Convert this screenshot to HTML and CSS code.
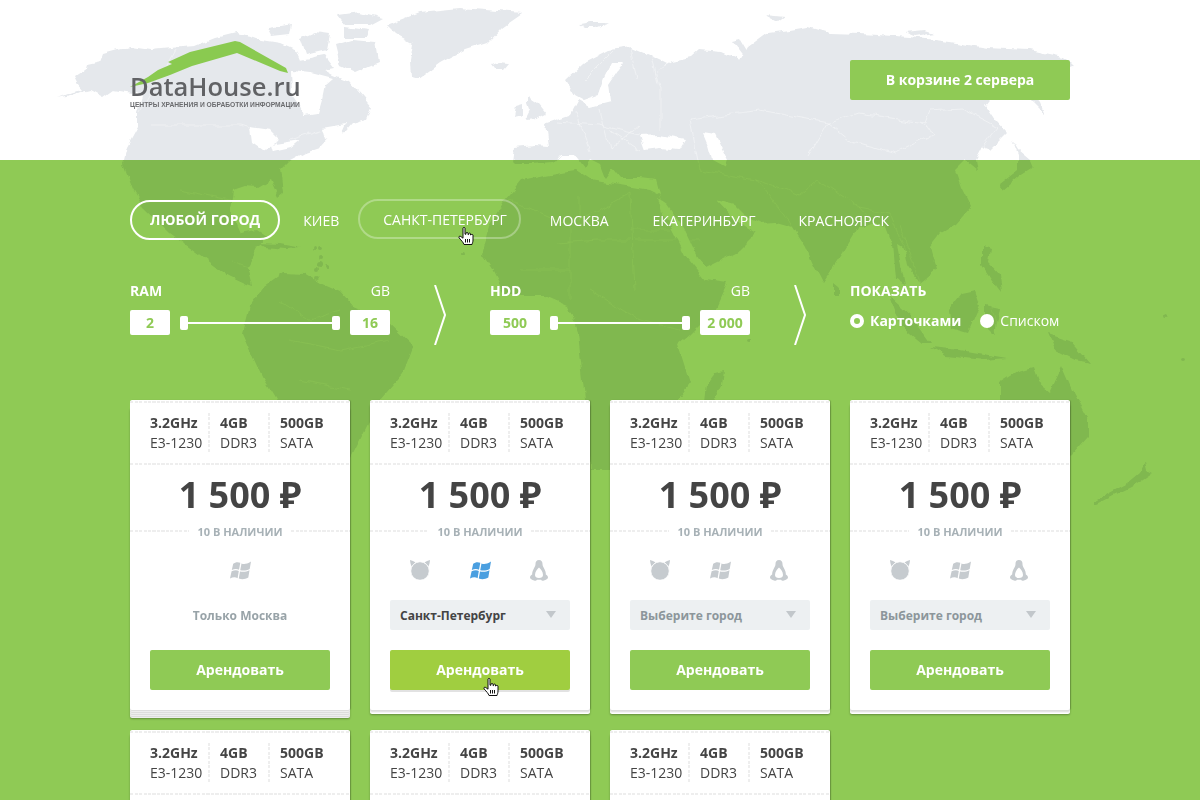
FILE: index.html
```html
<!DOCTYPE html>
<html lang="ru">
<head>
    <meta charset="UTF-8">
    <title>DataHouse.ru</title>
    <link rel="stylesheet" href="styles.css">
</head>
<body>
<svg class="defs" width="0" height="0">
    <filter id="rough" x="0" y="0" width="100%" height="100%">
        <feTurbulence type="fractalNoise" baseFrequency="0.07" numOctaves="3" seed="7"/>
        <feDisplacementMap in="SourceGraphic" scale="7" xChannelSelector="R" yChannelSelector="G"/>
    </filter>
    <symbol id="i-bsd" viewBox="0 0 20 20">
        <path d="M0 0C2 .4 4 1.200 5.500 2.600L2 7C.8 5 .1 2.500 0 0Z"/>
        <path d="M20 0C18 .4 16 1.200 14.500 2.600L18 7C19.200 5 19.900 2.500 20 0Z"/>
        <circle cx="10" cy="11" r="9.300" stroke="#fff" stroke-width="1"/>
    </symbol>
    <symbol id="i-win" viewBox="0 0 21 19">
        <path d="M3.200 2.800C5 1.200 8 .8 10.300 1.800L9 8.800C7 7.800 4.500 7.800 1.800 9Z"/>
        <path d="M11.500 2.400C13.500 3.600 16.500 3.400 21 .6L19.700 8C16.500 9.700 13.500 10 10.200 9.200Z"/>
        <path d="M1.600 10.300C4.500 9 7 9 8.800 10L7.600 17.300C5.500 16 3 16 0 17.600Z"/>
        <path d="M10 10.400C13 11.200 16 11 19.500 9.300L18.300 16.500C15 18.300 12.300 18.700 8.800 17.500Z"/>
    </symbol>
    <symbol id="i-tux" viewBox="0 0 18 21">
        <path fill-rule="evenodd" d="M9 0C11.400 0 12.600 1.800 12.500 4C12.400 6 13.500 7.200 14.500 9.200C15.500 11.200 16 13 15.800 14.600C17 15.200 18 16.200 18 17.400C18 18.800 16 19.800 13.800 20.600C12.800 21 11.500 20.800 11 19.800L7 19.800C6.500 20.800 5.200 21 4.200 20.600C2 19.800 0 18.800 0 17.400C0 16.200 1 15.200 2.200 14.600C2 13 2.500 11.200 3.500 9.200C4.500 7.200 5.600 6 5.500 4C5.400 1.800 6.600 0 9 0ZM9 7.500C7 9 5 12 5 15C5 16.800 6.500 18 9 18C11.500 18 13 16.800 13 15C13 12 11 9 9 7.500Z"/>
    </symbol>
    <symbol id="i-hand" viewBox="0 0 16 19">
        <path d="M5 1.200C5 .2 7 .2 7 1.200V7.200H8V6.200C8 5.200 10 5.200 10 6.200V7.600H10.600V6.800C10.600 5.800 12.500 5.800 12.500 6.800V8H13C13 7.200 15 7.200 15 8.200V13C15 15 14.500 15.600 14 17.500H6C5.400 15.500 3.600 13.800 1.200 11C.2 9.800 1.600 8.600 2.800 9.500L5 11.200Z" fill="#fff" stroke="#111" stroke-width="1"/>
        <path d="M7.500 12V15.500M9.500 12V15.500M11.500 12V15.500" fill="none" stroke="#111" stroke-width="1"/>
    </symbol>
</svg>
<div class="page">
    <svg class="world" viewBox="0 0 1200 800">
        <g filter="url(#rough)">
        <g class="land">
            <path d="M57 98L72 92 83 90 78 84 75 78 84 72 86 65 100 62 103 54 118 50 130 47 150 50 170 48 195 46 215 38 235 33 250 36 262 40 280 43 296 50 300 60 310 62 333 75 350 82 363 97 372 108 367 120 352 124 345 132 333 133 320 147 305 152 290 160 280 170 283 193 278 197 270 180 258 187 245 186 233 190 230 210 240 233 257 230 267 237 258 247 248 267 253 287 247 285 230 277 207 260 170 233 143 207 133 190 123 163 127 147 138 127 138 113 143 97 133 93 113 90 103 97 90 90Z"/>
            <path d="M263 287L283 273 305 274 320 283 340 292 353 307 385 320 413 347 403 373 380 400 360 440 340 480 320 470 300 440 277 400 263 377 243 333 250 305Z"/>
            <path d="M337 15L360 12 383 18 370 25 345 25ZM300 40L316 33 330 35 327 50 305 55ZM335 45L352 40 375 42 378 62 355 72 340 65ZM300 60L325 55 335 68 315 72ZM345 27L368 30 365 38 345 38ZM268 28L292 24 290 34 272 36Z"/>
            <path d="M387 25L420 12 460 8 522 13 502 27 487 43 465 50 441 63 418 80 411 78 410 60 413 43 395 33Z"/>
            <path d="M492 65L500 62 510 63 505 69 495 69ZM528 93L532 100 538 104 546 114 536 119 525 120 530 110 528 104ZM517 106L524 104 524 114 515 116ZM579 24L590 22 609 22 596 28 585 28ZM732 42L740 40 752 60 744 58ZM765 15L785 17 778 22ZM905 32L925 30 935 33 915 36Z"/>
            <path d="M513 163L515 147 535 145 548 146 545 124 570 115 578 100 590 107 610 102 608 85 618 70 624 62 612 62 604 78 598 95 584 100 575 95 566 80 584 63 609 50 630 47 660 60 668 64 657 72 672 62 691 58 700 50 722 52 740 60 748 47 767 33 790 30 808 27 829 33 860 34 910 37 950 42 987 48 1030 50 1063 57 1073 67 1050 72 1035 75 1025 85 1040 103 1045 115 1030 100 1012 92 995 92 985 105 995 120 1007 133 990 150 982 147 975 160 977 170 965 160 955 170 961 187 971 207 955 225 941 233 930 247 936 270 920 283 908 265 905 250 897 245 905 285 895 280 892 245 885 227 875 222 859 227 845 250 823 283 812 262 806 247 793 227 775 222 762 223 745 215 735 205 716 200 735 220 757 233 740 250 706 267 695 255 680 225 664 205 660 195 656 180 640 178 620 178 612 168 605 178 600 165 590 160 585 168 575 155 560 155 553 163 530 165 515 165Z"/>
            <path d="M522 180L545 175 575 170 590 180 620 185 650 190 660 195 670 225 685 255 705 280 727 283 715 310 690 335 678 345 690 383 670 410 640 470 590 470 585 400 578 333 568 305 545 295 505 295 492 270 482 255 490 225 505 200Z"/>
            <path d="M716 372L724 370 722 385 712 405 704 402 706 385ZM833 284L838 288 838 296 833 296ZM1012 140L1018 150 1030 160 1033 167 1020 175 1003 190 1000 184 1018 170 1018 155ZM982 247L990 250 988 262 1000 275 1002 293 992 280 982 265ZM890 297L910 315 930 343 922 343 900 325ZM961 293L975 290 980 305 968 333 950 328 948 310ZM930 347L960 350 1007 358 985 360 945 356ZM985 305L1000 308 995 335 985 325ZM1048 333L1070 340 1090 363 1075 360 1055 350ZM1000 383L1017 372 1033 368 1038 382 1050 392 1062 367 1072 390 1088 420 1088 437 1072 455 1000 470ZM1145 462L1147 470 1153 473 1132 487 1095 505 1095 501 1128 483 1140 473Z"/>
            <path d="M258 243L280 244 300 248 285 249 265 247Z"/>
            <circle cx="320" cy="250" r="2"/><circle cx="315" cy="250" r="2"/><circle cx="321" cy="258" r="2"/><circle cx="320" cy="265" r="3"/><circle cx="328" cy="267" r="2"/><circle cx="316" cy="270" r="2"/><circle cx="316" cy="278" r="2"/><circle cx="462" cy="253" r="2"/><circle cx="748" cy="340" r="2"/><circle cx="1165" cy="315" r="2"/><circle cx="1183" cy="360" r="2"/>
        </g>
        <g class="water">
            <path d="M292 70L310 72 333 78 325 85 322 100 318 114 305 116 300 105 293 95Z"/>
            <path d="M250 127L270 130 280 140 262 150 252 143ZM270 145L300 140 290 148 272 152ZM322 128L345 124 340 135 325 140Z"/>
            <path d="M640 136L660 135 686 140 680 150 660 148 645 150ZM703 133L715 135 727 160 725 167 712 160 708 145Z"/>
            <path d="M658 198L668 205 684 228 698 258 708 272 702 274 688 256 674 232 662 212Z"/>
        </g>
        <g class="borders">
            <path d="M150 125H240L262 132M140 113L175 50M290 140L323 130"/>
            <path d="M614 50L584 80M630 47L637 80M605 45L605 10M558 122L600 125 640 135M575 113L590 150M600 110L610 150 640 125M610 130L640 150M650 50L660 90 660 130"/>
            <path d="M690 120L760 110 828 123 859 113 925 123 930 110 961 108 997 127 982 147M828 123L849 140 895 153 936 133 920 123M808 157L828 123M690 120L700 170"/>
            <path d="M700 170L757 180 800 195 818 180 859 207 890 213 905 250M757 180L793 227M859 207L870 220 880 240M900 225L920 283"/>
            <path d="M232 260L260 270M280 300L310 320 340 310M290 340L340 350 390 340M300 380L350 390M180 190L230 200"/>
            <path d="M510 200L570 225 570 300M570 225L630 193 635 290M635 240L700 240M520 270L570 270M590 290L640 320 680 330M558 243L599 240 630 240M579 197V227M630 230H670"/>
            <path d="M990 300L1000 340"/>
        </g>
        </g>
    </svg>

    <header class="top">
        <a class="logo">
            <svg class="logo-roof" viewBox="0 0 170 52">
                <path d="M0 47L18 37 28 30 42 24 38 22 60 12 105 1 110 2 156 28 158 33 150 31 107 13 62 26 40 35 18 43Z"/>
            </svg>
            <span class="logo-name">DataHouse.ru</span>
            <span class="logo-sub">ЦЕНТРЫ ХРАНЕНИЯ И ОБРАБОТКИ ИНФОРМАЦИИ</span>
        </a>
        <a class="basket">В корзине 2 сервера</a>
    </header>

    <main class="content">
        <nav class="cities">
            <a class="city city-active">Любой город</a>
            <a class="city">Киев</a>
            <a class="city city-hover">Санкт-Петербург</a>
            <a class="city">Москва</a>
            <a class="city">Екатеринбург</a>
            <a class="city">Красноярск</a>
        </nav>

        <section class="filters">
            <div class="range">
                <div class="range-head"><b>RAM</b><span>GB</span></div>
                <div class="range-body">
                    <div class="range-val">2</div>
                    <div class="slider"><i></i><u></u><i></i></div>
                    <div class="range-val">16</div>
                </div>
            </div>
            <svg class="chevron" viewBox="0 0 12 60"><path d="M1 0L11 30 1 60"/></svg>
            <div class="range">
                <div class="range-head"><b>HDD</b><span>GB</span></div>
                <div class="range-body">
                    <div class="range-val range-val-wide">500</div>
                    <div class="slider"><i></i><u></u><i></i></div>
                    <div class="range-val range-val-wide">2 000</div>
                </div>
            </div>
            <svg class="chevron" viewBox="0 0 12 60"><path d="M1 0L11 30 1 60"/></svg>
            <div class="view">
                <div class="view-title">Показать</div>
                <div class="view-options">
                    <span class="radio radio-on">Карточками</span>
                    <span class="radio">Списком</span>
                </div>
            </div>
        </section>

        <section class="cards">
            <article class="card card-stack">
                <div class="specs">
                    <div class="spec spec-cpu"><b>3.2GHz</b>E3-1230</div>
                    <div class="spec spec-ram"><b>4GB</b>DDR3</div>
                    <div class="spec"><b>500GB</b>SATA</div>
                </div>
                <div class="price">1 500 ₽</div>
                <div class="stock">10 в наличии</div>
                <div class="os">
                    <svg class="ico ico-bsd ico-off"><use href="#i-bsd"/></svg>
                    <svg class="ico ico-win"><use href="#i-win"/></svg>
                    <svg class="ico ico-tux ico-off"><use href="#i-tux"/></svg>
                </div>
                <div class="only">Только Москва</div>
                <a class="rent">Арендовать</a>
            </article>
            <article class="card">
                <div class="specs">
                    <div class="spec spec-cpu"><b>3.2GHz</b>E3-1230</div>
                    <div class="spec spec-ram"><b>4GB</b>DDR3</div>
                    <div class="spec"><b>500GB</b>SATA</div>
                </div>
                <div class="price">1 500 ₽</div>
                <div class="stock">10 в наличии</div>
                <div class="os">
                    <svg class="ico ico-bsd"><use href="#i-bsd"/></svg>
                    <svg class="ico ico-win ico-blue"><use href="#i-win"/></svg>
                    <svg class="ico ico-tux"><use href="#i-tux"/></svg>
                </div>
                <div class="select select-filled">Санкт-Петербург</div>
                <a class="rent rent-hover">Арендовать</a>
                <svg class="hand hand-rent"><use href="#i-hand"/></svg>
            </article>
            <article class="card">
                <div class="specs">
                    <div class="spec spec-cpu"><b>3.2GHz</b>E3-1230</div>
                    <div class="spec spec-ram"><b>4GB</b>DDR3</div>
                    <div class="spec"><b>500GB</b>SATA</div>
                </div>
                <div class="price">1 500 ₽</div>
                <div class="stock">10 в наличии</div>
                <div class="os">
                    <svg class="ico ico-bsd"><use href="#i-bsd"/></svg>
                    <svg class="ico ico-win"><use href="#i-win"/></svg>
                    <svg class="ico ico-tux"><use href="#i-tux"/></svg>
                </div>
                <div class="select">Выберите город</div>
                <a class="rent">Арендовать</a>
            </article>
            <article class="card">
                <div class="specs">
                    <div class="spec spec-cpu"><b>3.2GHz</b>E3-1230</div>
                    <div class="spec spec-ram"><b>4GB</b>DDR3</div>
                    <div class="spec"><b>500GB</b>SATA</div>
                </div>
                <div class="price">1 500 ₽</div>
                <div class="stock">10 в наличии</div>
                <div class="os">
                    <svg class="ico ico-bsd"><use href="#i-bsd"/></svg>
                    <svg class="ico ico-win"><use href="#i-win"/></svg>
                    <svg class="ico ico-tux"><use href="#i-tux"/></svg>
                </div>
                <div class="select">Выберите город</div>
                <a class="rent">Арендовать</a>
            </article>
            <article class="card">
                <div class="specs">
                    <div class="spec spec-cpu"><b>3.2GHz</b>E3-1230</div>
                    <div class="spec spec-ram"><b>4GB</b>DDR3</div>
                    <div class="spec"><b>500GB</b>SATA</div>
                </div>
            </article>
            <article class="card">
                <div class="specs">
                    <div class="spec spec-cpu"><b>3.2GHz</b>E3-1230</div>
                    <div class="spec spec-ram"><b>4GB</b>DDR3</div>
                    <div class="spec"><b>500GB</b>SATA</div>
                </div>
            </article>
            <article class="card">
                <div class="specs">
                    <div class="spec spec-cpu"><b>3.2GHz</b>E3-1230</div>
                    <div class="spec spec-ram"><b>4GB</b>DDR3</div>
                    <div class="spec"><b>500GB</b>SATA</div>
                </div>
            </article>
        </section>

        <svg class="hand hand-city"><use href="#i-hand"/></svg>
    </main>
</div>
</body>
</html>
```

FILE: styles.css
```css
html, body {
    margin: 0;
    padding: 0;
    height: 800px;
    overflow: hidden;
}
body {
    font-family: "Open Sans", "Noto Sans", sans-serif;
    color: #444;
}
a {
    display: block;
}
.defs {
    position: absolute;
}
.page {
    position: relative;
    height: 800px;
    overflow: hidden;
    background: #fff;
    isolation: isolate;
}

/* map */
.world {
    position: absolute;
    left: 0;
    top: 0;
    width: 1200px;
    height: 800px;
}
.land {
    fill: #e5e8ec;
}
.water {
    fill: #fff;
}
.borders {
    fill: none;
    stroke: #fff;
    stroke-opacity: 0.4;
    stroke-width: 1;
}

/* header */
.top {
    position: relative;
    display: flex;
    justify-content: space-between;
    height: 160px;
    padding: 0 130px;
}
.logo {
    position: relative;
    width: 170px;
    padding-top: 72px;
}
.logo-roof {
    position: absolute;
    left: 0;
    top: 40px;
    width: 170px;
    height: 52px;
    fill: #8aca50;
}
.logo-name {
    position: relative;
    display: block;
    font-size: 25.500px;
    line-height: 28px;
    font-weight: 600;
    color: #616265;
    white-space: nowrap;
}
.logo-sub {
    display: block;
    margin-top: 1px;
    font-family: "Liberation Sans", Arial, sans-serif;
    font-size: 6.700px;
    line-height: 7px;
    font-weight: bold;
    color: #6a6b6e;
    white-space: nowrap;
}
.basket {
    width: 220px;
    height: 40px;
    margin-top: 60px;
    background: #8fca55;
    border-radius: 2px;
    color: #fff;
    font-size: 14px;
    font-weight: 700;
    line-height: 40px;
    text-align: center;
}

/* green band */
.content {
    position: relative;
    height: 640px;
    padding: 40px 130px 0;
    box-sizing: border-box;
    color: #fff;
}
.content::before {
    content: "";
    position: absolute;
    left: 0;
    top: 0;
    right: 0;
    bottom: 0;
    background: #8fca55;
    mix-blend-mode: multiply;
}
.content > * {
    position: relative;
}

.cities {
    display: flex;
    align-items: center;
    height: 40px;
    font-size: 14px;
    text-transform: uppercase;
    white-space: nowrap;
}
.city {
    margin-right: 44px;
}
.city-active {
    height: 40px;
    box-sizing: border-box;
    margin-right: 23px;
    padding: 0 18px;
    border: 2px solid #fff;
    border-radius: 20px;
    font-weight: 700;
    line-height: 36px;
}
.city:nth-child(2) {
    margin-right: 19px;
}
.city:nth-child(5) {
    margin-right: 43px;
}
.city-hover {
    height: 40px;
    box-sizing: border-box;
    margin: 0 29px 2px 0;
    padding: 0 12px 0 23px;
    border: 2px solid rgba(255, 255, 255, 0.3);
    border-radius: 20px;
    line-height: 38px;
}

.filters {
    display: flex;
    margin-top: 42px;
    height: 78px;
}
.range {
    flex: none;
    width: 260px;
}
.range-head {
    display: flex;
    justify-content: space-between;
    font-size: 14px;
    line-height: 18px;
}
.range-body {
    display: flex;
    align-items: center;
    margin-top: 10px;
}
.range-val {
    width: 40px;
    height: 25px;
    background: #fff;
    border-radius: 2px;
    color: #8fca55;
    font-size: 14px;
    font-weight: 700;
    line-height: 25px;
    text-align: center;
}
.range-val-wide {
    width: 50px;
}
.slider {
    flex: 1;
    display: flex;
    align-items: center;
    margin: 1px 10px 0;
}
.slider i {
    width: 8px;
    height: 14px;
    background: #fff;
    border-radius: 2px;
}
.slider u {
    flex: 1;
    height: 2px;
    background: #fff;
}
.chevron {
    flex: none;
    width: 12px;
    height: 60px;
    margin: 3px 44px 0;
    fill: none;
    stroke: #fff;
    stroke-width: 2;
}
.view {
    flex: none;
}
.view-title {
    font-size: 14px;
    font-weight: 700;
    line-height: 18px;
    text-transform: uppercase;
}
.view-options {
    display: flex;
    margin-top: 12px;
    font-size: 14px;
    line-height: 18px;
}
.radio {
    display: flex;
    align-items: center;
    margin-right: 19px;
}
.radio::before {
    content: "";
    width: 14px;
    height: 14px;
    margin-right: 6px;
    background: #fff;
    border-radius: 50%;
}
.radio-on {
    font-weight: 700;
}
.radio-on::before {
    box-sizing: border-box;
    background: #8fca55;
    border: 4px solid #fff;
}

/* cards */
.cards {
    display: grid;
    grid-template-columns: repeat(4, 220px);
    grid-auto-rows: 310px;
    gap: 20px;
    margin-top: 40px;
}
.card {
    position: relative;
    background: #fff;
    border-radius: 2px;
    box-shadow: 0 1px 0 #ddd, 0 2px 0 #e4e4e4, 0 3px 0 #f4f4f4, 0 4px 0 #fff, 0 5px 2px rgba(0, 0, 0, 0.3), 1px 0 1px rgba(0, 0, 0, 0.2);
    color: #444;
}
.card-stack {
    box-shadow: 0 1px 0 #ddd, 0 2px 0 #eee, 0 3px 0 #ddd, 0 4px 0 #eee, 0 5px 0 #ddd, 0 6px 0 #eee, 0 7px 0 #ddd, 0 8px 0 #eee, 0 9px 2px rgba(0, 0, 0, 0.3), 1px 0 1px rgba(0, 0, 0, 0.2);
}
.specs {
    display: flex;
    margin-top: 1px;
    padding: 12px 20px;
    background:
        repeating-linear-gradient(90deg, #eee 0 3px, transparent 3px 4.500px) top / 100% 2px no-repeat,
        repeating-linear-gradient(90deg, #eee 0 3px, transparent 3px 4.500px) bottom / 100% 2px no-repeat;
    font-size: 14px;
    line-height: 20px;
    white-space: nowrap;
}
.spec b {
    display: block;
}
.spec-cpu {
    width: 60px;
    flex: none;
}
.spec-ram {
    width: 50px;
    flex: none;
}
.spec-cpu, .spec-ram {
    margin-right: 10px;
    background: repeating-linear-gradient(180deg, #eee 0 3px, transparent 3px 4.500px) right / 2px 100% no-repeat;
}
.price {
    font-size: 36px;
    font-weight: 700;
    line-height: 59px;
    text-align: center;
}
.stock {
    display: flex;
    align-items: center;
    gap: 8px;
    height: 14px;
    color: #a7b1b6;
    font-size: 11px;
    font-weight: 700;
    text-transform: uppercase;
    white-space: nowrap;
}
.stock::before, .stock::after {
    content: "";
    flex: 1;
    height: 2px;
    background: repeating-linear-gradient(90deg, #eee 0 3px, transparent 3px 4.500px);
}
.os {
    display: flex;
    justify-content: space-between;
    align-items: center;
    height: 20px;
    margin: 22px 0 0;
    padding: 0 42px 0 40px;
}
.ico {
    fill: #c6cbcf;
}
.ico-bsd {
    width: 20px;
    height: 20px;
}
.ico-win {
    width: 21px;
    height: 19px;
}
.ico-tux {
    width: 18px;
    height: 21px;
}
.ico-off {
    visibility: hidden;
}
.ico-blue {
    fill: #4a9fe0;
}
.only {
    height: 29px;
    margin-top: 20px;
    padding-top: 1px;
    color: #98a3a8;
    font-size: 12px;
    font-weight: 700;
    line-height: 30px;
    text-align: center;
}
.select {
    position: relative;
    height: 29px;
    margin: 20px 20px 0;
    padding: 1px 0 0 10px;
    background: #edf0f2;
    border-radius: 2px;
    color: #8c969b;
    font-size: 12px;
    font-weight: 700;
    line-height: 30px;
}
.select-filled {
    color: #444;
}
.select::after {
    content: "";
    position: absolute;
    right: 14px;
    top: 11px;
    border-top: 7px solid #c2c7cb;
    border-left: 5px solid transparent;
    border-right: 5px solid transparent;
}
.rent {
    height: 40px;
    margin: 20px 20px 0;
    background: #8fca55;
    border-radius: 2px;
    color: #fff;
    font-size: 14px;
    font-weight: 700;
    line-height: 40px;
    text-align: center;
}
.rent-hover {
    background: #a0ce40;
    box-shadow: 0 2px 0 #e2e2e2;
}
.hand {
    position: absolute;
    width: 16px;
    height: 19px;
}
.hand-city {
    left: 458px;
    top: 67px;
}
.hand-rent {
    left: 113px;
    top: 278px;
}
```
